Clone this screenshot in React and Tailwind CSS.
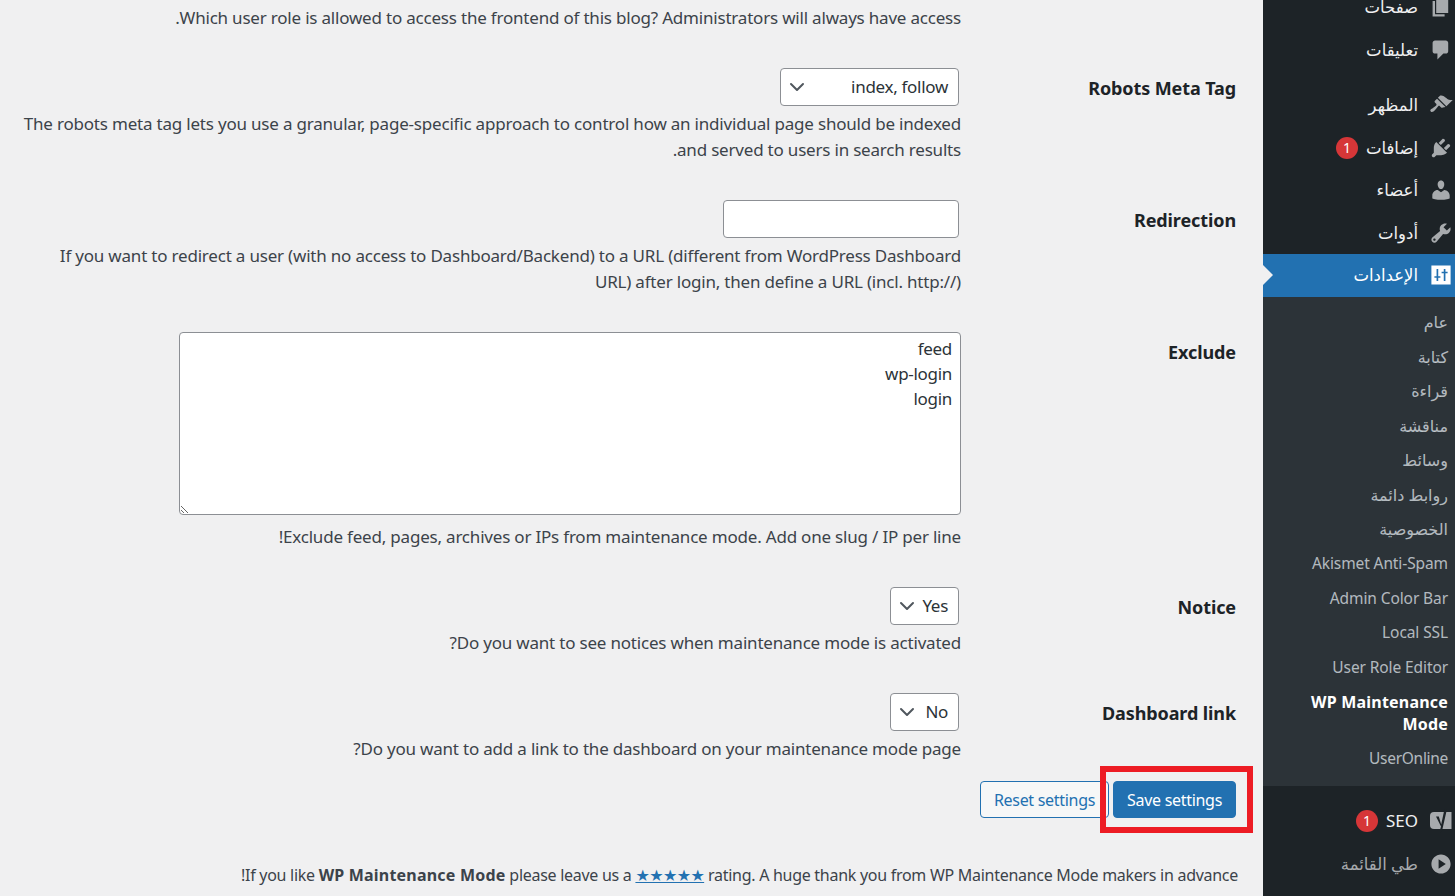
import { ChevronDown } from "lucide-react";

const font = { fontFamily: '"Noto Sans", "DejaVu Sans", sans-serif' };

const Pages = "M6 15V2h10v13H6zm-1 1h8v2H3V5h2v11z";
const Comment = "M5 2h9c1.1 0 2 .9 2 2v7c0 1.1-.9 2-2 2h-2l-5 5v-5H5c-1.1 0-2-.9-2-2V4c0-1.1.9-2 2-2z";
const Brush = "M14.48 11.06L7.41 3.99l1.5-1.5c.5-.56 2.3-.47 3.51.32 1.21.8 1.43 1.28 2.91 2.1 1.18.64 2.45 1.26 4.45.85zm-.71.71L6.7 4.7 4.93 6.47c-.39.39-.39 1.02 0 1.41l1.06 1.06c.39.39.39 1.03 0 1.42-.6.6-1.43 1.11-2.21 1.69-.35.26-.7.53-1.01.84C1.43 13.23.5 14.5 1.5 15.5s2.27.07 3.61-1.27c.31-.31.58-.66.85-1.01.58-.78 1.09-1.61 1.69-2.21.39-.39 1.02-.39 1.41 0l1.06 1.06c.39.39 1.02.39 1.41 0z";
const Plug = "M13.11 4.36L9.87 7.6 8 5.73l3.24-3.24c.35-.34 1.05-.2 1.56.32.52.51.66 1.21.31 1.55zm-8 1.77l.91-1.12 9.01 9.01-1.19.84c-.71.71-2.63 1.16-3.82 1.16H6.14L4.9 17.26c-.59.59-1.54.59-2.12 0-.59-.58-.59-1.53 0-2.12l1.24-1.24v-3.88c0-1.13.4-3.19 1.09-3.89zm7.26 3.97l3.24-3.24c.34-.35 1.04-.21 1.55.31.52.51.66 1.21.31 1.55l-3.24 3.25z";
const User = "M10 9.25c-2.27 0-2.73-3.44-2.73-3.44C7 4.02 7.82 2 9.97 2c2.16 0 2.98 2.02 2.71 3.81 0 0-.41 3.44-2.68 3.44zm0 2.57L12.72 10c2.39 0 4.52 2.33 4.52 4.53v2.49s-3.65 1.13-7.24 1.13c-3.65 0-7.24-1.13-7.24-1.13v-2.49c0-2.25 1.94-4.48 4.47-4.48z";
const Wrench = "M16.68 9.77c-1.34 1.34-3.3 1.67-4.95.99l-5.41 6.52c-.99.99-2.59.99-3.58 0s-.99-2.59 0-3.57l6.52-5.42c-.68-1.65-.35-3.61.99-4.95 1.28-1.28 3.12-1.62 4.72-1.06l-2.89 2.89 2.82 2.82 2.86-2.87c.53 1.58.18 3.39-1.08 4.65zM3.81 16.21c.4.39 1.04.39 1.43 0 .4-.4.4-1.04 0-1.43-.39-.4-1.03-.4-1.43 0-.39.39-.39 1.03 0 1.43z";
const Settings = "M2 2h16v16H2z M6.300 5v6H4.500v1.300h1.800V15h1.400v-2.700h1.800V11H7.700V5z M12.300 5v2.200h-1.800v1.300h1.800V15h1.400V8.500h1.800V7.200h-1.800V5z";
const Play = "M10 2c-4.42 0-8 3.58-8 8s3.58 8 8 8 8-3.58 8-8-3.58-8-8-8zm-2 12V6l6 4z";

function Icon({ d, active }) {
  return (
    <svg viewBox="0 0 20 20" className={`w-6 h-6 shrink-0 ${active ? "fill-white" : "fill-[#a7aaad]"}`}>
      <path fillRule="evenodd" d={d} />
    </svg>
  );
}

function Yoast() {
  return (
    <svg viewBox="0 0 24 24" className="w-6 h-6 shrink-0">
      <path d="M5 3h17.500v17H5a4 4 0 0 1-4-4V7a4 4 0 0 1 4-4z" className="fill-[#a7aaad]" />
      <path d="M7 7.500h2.800l2.400 8L15.500 0h2.500l-5 22-2 2v-3l1-3.500z" className="fill-[#1d2327]" />
    </svg>
  );
}

function Badge({ n }) {
  return (
    <span className="w-[22px] h-[22px] rounded-full bg-[#d63638] text-white text-[14px] leading-[22px] text-center shrink-0">
      {n}
    </span>
  );
}

function MenuItem({ icon, label, badge, children, active, dim }) {
  return (
    <div
      className={`relative h-[42.5px] flex items-center pr-[2px] ${active ? "bg-[#2271b1] text-white" : dim ? "text-[#a7aaad]" : "text-[#f0f0f1]"}`}
    >
      {children || <Icon d={icon} active={active} />}
      <span className={`mr-[11px] leading-[26px] whitespace-nowrap ${children ? "text-[17px]" : "text-[16.5px]"}`}>{label}</span>
      {badge && <span className="mr-[8px] flex"><Badge n={badge} /></span>}
      {active && (
        <span className="absolute left-0 top-1/2 -translate-y-1/2 w-0 h-0 border-y-[10px] border-y-transparent border-l-[10px] border-l-[#f0f0f1]" />
      )}
    </div>
  );
}

const arabicItems = ["عام", "كتابة", "قراءة", "مناقشة", "وسائط", "روابط دائمة", "الخصوصية"];
const latinItems = ["Akismet Anti-Spam", "Admin Color Bar", "Local SSL", "User Role Editor"];

function Sidebar() {
  return (
    <aside className="w-[192px] shrink-0 h-[896px] overflow-hidden bg-[#1d2327]">
      <div className="mt-[-14px]">
        <MenuItem icon={Pages} label="صفحات" />
        <MenuItem icon={Comment} label="تعليقات" />
        <div className="h-[13px]" />
        <MenuItem icon={Brush} label="المظهر" />
        <MenuItem icon={Plug} label="إضافات" badge="1" />
        <MenuItem icon={User} label="أعضاء" />
        <MenuItem icon={Wrench} label="أدوات" />
        <MenuItem icon={Settings} label="الإعدادات" active />
        <div className="bg-[#2c3338] pt-[8.5px] pb-[10px]">
          {arabicItems.map((s) => (
            <div key={s} className="h-[34.5px] pr-[7px] flex items-center text-[16px] text-[#f0f6fc]/70 whitespace-nowrap">
              {s}
            </div>
          ))}
          {latinItems.map((s) => (
            <div key={s} className="h-[34.5px] pr-[7px] flex items-center text-[15.5px] tracking-[-0.1px] text-[#f0f6fc]/70 whitespace-nowrap">
              {s}
            </div>
          ))}
          <div className="pr-[7px] pl-[40px] py-[6.5px] text-[16px] tracking-[0.2px] leading-[22px] font-bold text-white">
            WP Maintenance Mode
          </div>
          <div className="h-[34.5px] pr-[7px] flex items-center text-[15.5px] tracking-[-0.3px] text-[#f0f6fc]/70">UserOnline</div>
        </div>
        <div className="h-[14px]" />
        <MenuItem label="SEO" badge="1">
          <Yoast />
        </MenuItem>
        <MenuItem icon={Play} label="طي القائمة" dim />
      </div>
    </aside>
  );
}

function Select({ value, width }) {
  return (
    <div className={`${width} h-[38px] mr-[2px] mb-[5px] flex items-center justify-between pr-[10px] pl-[4px] bg-white border border-[#8c8f94] rounded text-[17px] tracking-[-0.3px] text-[#2c3338]`}>
      <span>{value}</span>
      <ChevronDown className="w-6 h-6 text-[#50575e]" strokeWidth={2} />
    </div>
  );
}

function Desc({ children }) {
  return <p className="text-[17px] tracking-[-0.2px] leading-[26px] text-[#3c434a]">{children}</p>;
}

function Row({ label, children }) {
  return (
    <div className="flex mt-[37px]">
      <div className="w-[275px] shrink-0 pt-[7px] text-[18px] tracking-[-0.1px] leading-[26px] font-bold text-[#1d2327]">{label}</div>
      <div className="flex-1">{children}</div>
    </div>
  );
}

export default function App() {
  return (
    <div dir="rtl" className="flex h-[896px] overflow-hidden bg-[#f0f0f1]" style={font}>
      <Sidebar />
      <main className="relative flex-1 pt-[5px] pr-[27px]">
        <div className="mr-[275px] ml-[20px]">
          <Desc>Which user role is allowed to access the frontend of this blog? Administrators will always have access.</Desc>
        </div>

        <div className="ml-[20px]">
          <Row label="Robots Meta Tag">
            <Select value="index, follow" width="w-[179px]" />
            <Desc>The robots meta tag lets you use a granular, page-specific approach to control how an individual page should be indexed and served to users in search results.</Desc>
          </Row>

          <Row label="Redirection">
            <input className="block w-[236px] h-[38px] mr-[2px] mb-[5px] bg-white border border-[#8c8f94] rounded" />
            <Desc>If you want to redirect a user (with no access to Dashboard/Backend) to a URL (different from WordPress Dashboard URL) after login, then define a URL (incl. http://)</Desc>
          </Row>

          <Row label="Exclude">
            <textarea
              dir="rtl"
              defaultValue={"feed\nwp-login\nlogin"}
              className="block w-[782px] h-[183px] mb-[9px] px-2 py-[3px] bg-white border border-[#8c8f94] rounded text-[17px] tracking-[-0.3px] leading-[25px] text-[#2c3338]"
            />
            <Desc>Exclude feed, pages, archives or IPs from maintenance mode. Add one slug / IP per line!</Desc>
          </Row>

          <Row label="Notice">
            <Select value="Yes" width="w-[69px]" />
            <Desc>Do you want to see notices when maintenance mode is activated?</Desc>
          </Row>

          <Row label="Dashboard link">
            <Select value="No" width="w-[69px]" />
            <Desc>Do you want to add a link to the dashboard on your maintenance mode page?</Desc>
          </Row>
        </div>

        <div className="relative flex gap-[4px] mt-[19px]">
          <button className="h-[37px] px-[13px] bg-[#2271b1] text-white border border-[#2271b1] rounded text-[16px] tracking-[-0.3px] whitespace-nowrap">
            Save settings
          </button>
          <button className="h-[37px] px-[13px] bg-[#f6f7f7] text-[#2271b1] border border-[#2271b1] rounded text-[16px] tracking-[-0.3px] whitespace-nowrap">
            Reset settings
          </button>
          <div className="absolute top-[-15px] right-[-17px] w-[153px] h-[67px] border-[6px] border-[#ed1c24]" />
        </div>

        <p className="mt-[44px] mr-[-2px] text-[16px] tracking-[-0.28px] leading-[26px] text-[#3c434a] whitespace-nowrap">
          If you like <strong className="tracking-[0.2px]">WP Maintenance Mode</strong> please leave us a{" "}
          <a className="text-[#2271b1] underline tracking-[-0.6px]">★★★★★</a> rating. A huge thank you from WP Maintenance Mode makers in advance!
        </p>
      </main>
    </div>
  );
}
